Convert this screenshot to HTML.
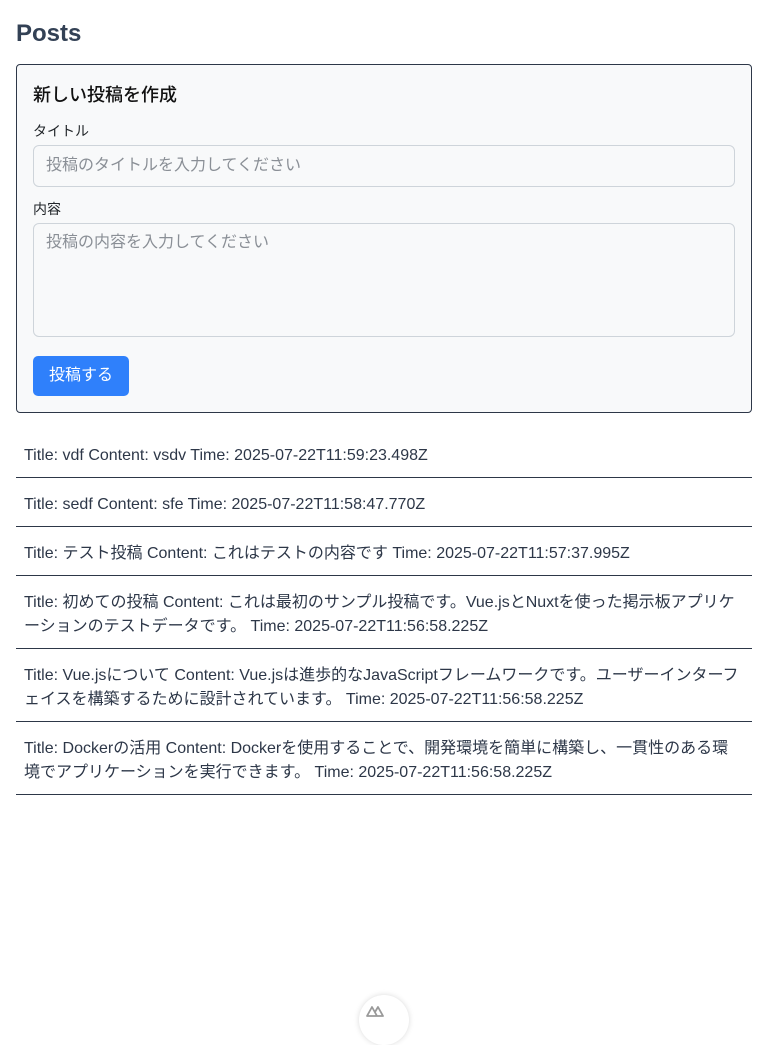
<!DOCTYPE html>
<html><head><meta charset="utf-8"><style>
*{box-sizing:border-box;margin:0;padding:0}
body{width:768px;height:1024px;background:#fff;font-family:"Liberation Sans","Noto Sans CJK JP",sans-serif;color:#2d3748;position:relative;overflow:hidden}
.wrap{padding:16px}
h1{font-size:24px;font-weight:700;color:#334155;line-height:36px;height:48px}
.card{border:1px solid #2d3748;border-radius:4px;background:#f8f9fa;padding:16px;height:349px}
.card h2{font-size:18px;font-weight:500;color:#111;line-height:28px;margin-bottom:12px}
label{display:block;font-size:14px;color:#212529;line-height:20px;margin-bottom:4px}
.in{height:42px;border:1px solid #ced4da;border-radius:6px;background:#f8f9fa;padding:0 12px;font-size:16px;color:#8a8f96;line-height:40px;margin-bottom:12px}
.ta{height:114px;line-height:38px;padding-top:0;position:relative}
.btn{margin-top:19px;width:96px;height:40px;background:#2f80fb;color:#fff;border-radius:5px;font-size:16px;line-height:40px;text-align:center}
ul{list-style:none;margin-top:16px}
li{border-bottom:1px solid #2d3748;padding:15px 8px 9px;font-size:16px;line-height:24px;color:#2d3748}
.nx{position:absolute;left:359px;top:995px;width:50px;height:50px;border-radius:50%;background:#fff;box-shadow:0 0 6px rgba(0,0,0,.15)}
</style></head><body>
<div class="wrap">
<h1>Posts</h1>
<div class="card">
<h2>新しい投稿を作成</h2>
<label>タイトル</label>
<div class="in">投稿のタイトルを入力してください</div>
<label>内容</label>
<div class="in ta">投稿の内容を入力してください</div>
<div class="btn">投稿する</div>
</div>
<ul>
<li>Title: vdf Content: vsdv Time: 2025-07-22T11:59:23.498Z</li>
<li>Title: sedf Content: sfe Time: 2025-07-22T11:58:47.770Z</li>
<li>Title: テスト投稿 Content: これはテストの内容です Time: 2025-07-22T11:57:37.995Z</li>
<li>Title: 初めての投稿 Content: これは最初のサンプル投稿です。Vue.jsとNuxtを使った掲示板アプリケーションのテストデータです。 Time: 2025-07-22T11:56:58.225Z</li>
<li>Title: Vue.jsについて Content: Vue.jsは進歩的なJavaScriptフレームワークです。ユーザーインターフェイスを構築するために設計されています。 Time: 2025-07-22T11:56:58.225Z</li>
<li>Title: Dockerの活用 Content: Dockerを使用することで、開発環境を簡単に構築し、一貫性のある環境でアプリケーションを実行できます。 Time: 2025-07-22T11:56:58.225Z</li>
</ul>
</div>
<div class="nx"><svg width="50" height="30" viewBox="0 0 50 30"><path d="M8 21 L13 12 L18 21 Z M16 17 L19 12 L24 21 L18 21" fill="none" stroke="#999" stroke-width="1.8" stroke-linejoin="round"/></svg></div>
</body></html>
